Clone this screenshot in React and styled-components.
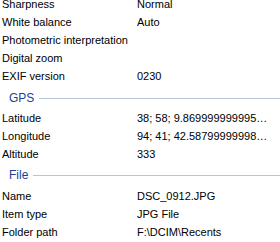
import React from 'react';
import styled, { createGlobalStyle } from 'styled-components';

const GlobalStyle = createGlobalStyle`
  html, body {
    margin: 0;
    padding: 0;
    background: #ffffff;
    overflow: hidden;
  }
  body {
    font-family: "Liberation Sans", Arial, sans-serif;
    font-size: 11px;
    color: #000000;
  }
`;

const Panel = styled.div`
  width: 280px;
  height: 242px;
  overflow: hidden;
  background: #ffffff;
`;

const List = styled.div`
  display: flex;
  flex-direction: column;
  margin-top: -5px;
`;

const Row = styled.div`
  display: grid;
  grid-template-columns: 135px 133px;
  height: 18px;
  align-items: center;
  padding-left: 2px;
`;

const Label = styled.span`
  white-space: nowrap;
`;

const Value = styled.span`
  white-space: nowrap;
  overflow: hidden;
  text-overflow: ellipsis;
`;

const Header = styled.div`
  display: flex;
  align-items: center;
  gap: 5px;
  height: 24px;
  padding-left: 9px;
  padding-top: ${(p) => p.$offset || 0}px;
  box-sizing: border-box;
  color: #1e3e9a;
  font-size: 12px;
`;

const Rule = styled.div`
  flex: 1;
  height: 1px;
  background: #b4c6d8;
`;

const sections = [
  {
    rows: [
      ['Sharpness', 'Normal'],
      ['White balance', 'Auto'],
      ['Photometric interpretation', ''],
      ['Digital zoom', ''],
      ['EXIF version', '0230'],
    ],
  },
  {
    title: 'GPS',
    offset: 2,
    rows: [
      ['Latitude', '38; 58; 9.869999999995000000'],
      ['Longitude', '94; 41; 42.587999999980000'],
      ['Altitude', '333'],
    ],
  },
  {
    title: 'File',
    offset: 0,
    rows: [
      ['Name', 'DSC_0912.JPG'],
      ['Item type', 'JPG File'],
      ['Folder path', 'F:\\DCIM\\Recents'],
    ],
  },
];

export default function App() {
  return (
    <Panel>
      <GlobalStyle />
      <List>
        {sections.map((s, i) => (
          <React.Fragment key={i}>
            {s.title && (
              <Header $offset={s.offset}>
                <span>{s.title}</span>
                <Rule />
              </Header>
            )}
            {s.rows.map(([label, value]) => (
              <Row key={label}>
                <Label>{label}</Label>
                <Value>{value}</Value>
              </Row>
            ))}
          </React.Fragment>
        ))}
      </List>
    </Panel>
  );
}
